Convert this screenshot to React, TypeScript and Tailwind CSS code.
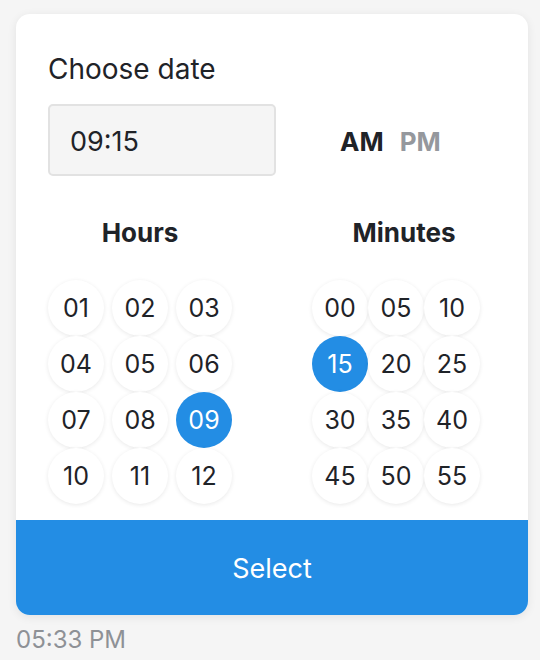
const hours = ["01", "02", "03", "04", "05", "06", "07", "08", "09", "10", "11", "12"];
const minutes = ["00", "05", "10", "15", "20", "25", "30", "35", "40", "45", "50", "55"];

const Bubble = ({ label, active }: { label: string; active: boolean }) => (
    <button
        type="button"
        className={`w-14 h-14 rounded-full flex items-center justify-center pt-[2px] text-[25px] ${
            active
                ? "bg-[#238de4] text-white"
                : "bg-white text-[#1f2328] shadow-[0_1px_4px_rgba(0,0,0,0.09)]"
        }`}
    >
        {label}
    </button>
);

const App = () => {
    const hour = "09";
    const minute = "15";

    return (
        <div
            className="w-[540px] h-[660px] bg-[#f5f5f5] pt-[14px] px-4"
            style={{ fontFamily: "Inter, 'Noto Sans', sans-serif" }}
        >
            <div className="w-[512px] bg-white rounded-[14px] shadow-[0_2px_10px_rgba(0,0,0,0.08)] overflow-hidden">
                <div className="px-8 pt-[37px] pb-4">
                    <h1 className="text-[28px] leading-[36px] text-[#1f2328]">Choose date</h1>

                    <div className="mt-[17px] flex items-center">
                        <div className="w-[228px] h-[72px] bg-[#f5f5f5] border-2 border-[#e2e2e2] rounded-[5px] flex items-center pl-5 pt-[4px] text-[27px] text-[#1f2328]">
                            {hour}:{minute}
                        </div>
                        <div className="ml-16 mt-[3px] flex gap-4 text-[26px] font-bold">
                            <span className="text-[#1f2328]">AM</span>
                            <span className="text-[#95989d]">PM</span>
                        </div>
                    </div>

                    <div className="mt-[41px] flex justify-between">
                        <div className="w-[184px] flex flex-col items-center">
                            <h2 className="text-[26px] leading-[32px] font-bold text-[#1f2328]">Hours</h2>
                            <div className="mt-[31px] grid grid-cols-3 gap-x-2">
                                {hours.map((h) => (
                                    <Bubble key={h} label={h} active={h === hour} />
                                ))}
                            </div>
                        </div>
                        <div className="w-[184px] flex flex-col">
                            <h2 className="text-[26px] leading-[32px] font-bold text-[#1f2328] text-center">Minutes</h2>
                            <div className="mt-[31px] grid grid-cols-[56px_56px_56px]">
                                {minutes.map((m) => (
                                    <Bubble key={m} label={m} active={m === minute} />
                                ))}
                            </div>
                        </div>
                    </div>
                </div>

                <button
                    type="button"
                    className="w-full h-[95px] bg-[#238de4] text-white text-[27px] pt-[3px]"
                >
                    Select
                </button>
            </div>
            <p className="mt-[9px] text-[24px] leading-[32px] text-[#8e9196]">05:33 PM</p>
        </div>
    );
};

export default App;
